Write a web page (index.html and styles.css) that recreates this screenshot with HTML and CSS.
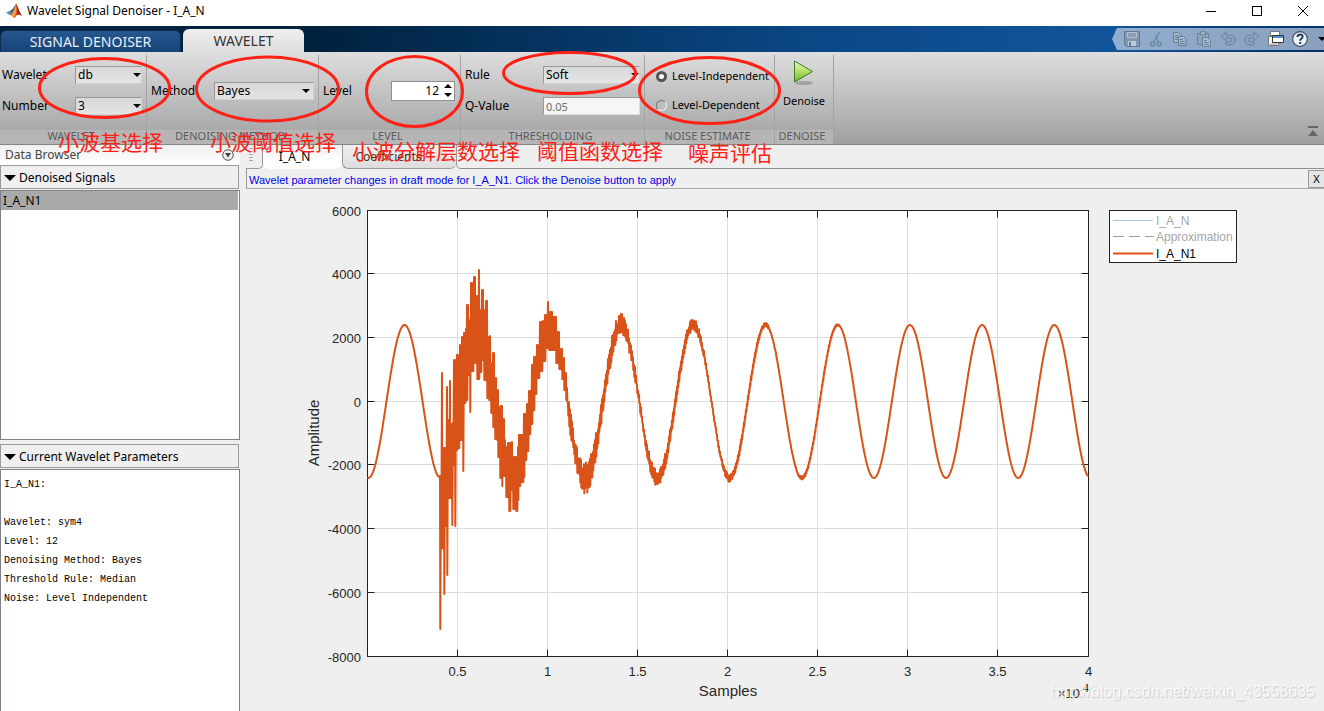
FILE: index.html
```html
<!DOCTYPE html>
<html lang="en">
<head>
<meta charset="utf-8">
<title>Wavelet Signal Denoiser - I_A_N</title>
<link rel="stylesheet" href="styles.css">
</head>
<body>
<div class="app">
  <header class="titlebar">
    <svg class="logo" width="16" height="16" viewBox="0 0 16 16" aria-hidden="true">
      <path d="M0 9.5 4.5 7.5 6.8 9.7 3.6 12z" fill="#4a8fc4"/>
      <path d="M4.5 7.5 Q7 6.5 8.5 3 L9.8 1 8.5 7.5 6 10.5z" fill="#2d5f8c"/>
      <path d="M10 .5Q8.500 4 7.500 7.500L3.800 12 Q6 11.500 7.500 15 Q10 14 11.500 11.500 13 10.500 15.800 13 Q13 8 11.500 3.500 10.500.8 10 .5z" fill="#d9532c"/>
      <path d="M10 .5Q8.800 7 5.500 12.200L7.500 15Q10 12 10.400 7z" fill="#f0a050"/>
      <path d="M10 .5Q12 7 10.800 12 13 10.500 15.800 13 Q13 8 11.500 3.500 10.500.8 10 .5z" fill="#9a2a1c"/>
    </svg>
    <h1 class="title">Wavelet Signal Denoiser - I_A_N</h1>
    <div class="window-buttons">
      <button type="button" aria-label="Minimize"><svg width="12" height="12"><path d="M1 6.500h10" stroke="#000"/></svg></button>
      <button type="button" aria-label="Maximize"><svg width="12" height="12"><rect x="1.500" y="1.500" width="9" height="9" fill="none" stroke="#000"/></svg></button>
      <button type="button" aria-label="Close"><svg width="12" height="12"><path d="M1 1l10 10M11 1L1 11" stroke="#000"/></svg></button>
    </div>
  </header>

  <nav class="tabstrip">
    <button type="button" class="main-tab">SIGNAL DENOISER</button>
    <button type="button" class="main-tab selected">WAVELET</button>
    <div class="quick">
      <button type="button" class="dim" aria-label="Save"><svg width="16" height="16" viewBox="0 0 16 16"><path d="M.5.5h15v15H2.500l-2-2z" fill="#8297af" stroke="#627992"/><path d="M3 1h10v6H3z" fill="#b0c1d4"/><path d="M4 3h8M4 5h8" stroke="#627992"/><path d="M4 10h8v5H4z" fill="#bccbda"/><path d="M5 11h2v4H5z" fill="#627992"/></svg></button>
      <button type="button" class="dim" aria-label="Cut"><svg width="16" height="16" viewBox="0 0 16 16" fill="none" stroke="#6f879f" stroke-width="1.400"><path d="M11.500 1 6 11M7.500 5l3 6"/><circle cx="4.500" cy="13" r="2"/><circle cx="11" cy="13" r="2"/></svg></button>
      <button type="button" class="dim" aria-label="Copy"><svg width="16" height="16" viewBox="0 0 16 16" fill="#a5b7cb" stroke="#667e97"><path d="M1.500 1.500h5l2.500 2.500v7.500H1.500z"/><path d="M3 4.500h3M3 6.500h4M3 8.500h4"/><path d="M6.500 5.500h5l2.500 2.500v6.500H6.500z"/><path d="M8 8.500h3M8 10.500h4.500M8 12.500h4.500"/></svg></button>
      <button type="button" class="dim" aria-label="Paste"><svg width="16" height="16" viewBox="0 0 16 16" fill="#8fa3ba" stroke="#6b829b"><path d="M1.500 2.500h11v11h-11z"/><path d="M4.500.8h5v3h-5z" fill="#a9bacd"/><path d="M6.500 6.500h5l3 2.500v6.500h-8z" fill="#a9bacd"/><path d="M8 9.500h3M8 11.500h5M8 13.500h5"/></svg></button>
      <button type="button" class="dim" aria-label="Undo"><svg width="16" height="16" viewBox="0 0 16 16"><path d="M1 5.500 6 1v3h4a5 5 0 0 1 0 10H6v-3h3.500a2 2 0 0 0 0-4H6v3z" fill="#8da3bb" stroke="#6b829b"/></svg></button>
      <button type="button" class="dim" aria-label="Redo"><svg width="16" height="16" viewBox="0 0 16 16"><path d="M15 5.500 10 1v3H6a5 5 0 0 0 0 10h4v-3H6.500a2 2 0 0 1 0-4H10v3z" fill="#8da3bb" stroke="#6b829b"/></svg></button>
      <button type="button" aria-label="Switch windows"><svg width="16" height="16" viewBox="0 0 16 16"><path d="M2.500.5h9v4h-9z" fill="#fff" stroke="#777"/><path d="M.5 5.500v9h10v-9z" fill="#f4f1ec" stroke="#777"/><path d="M2 13h7" stroke="#999"/><path d="M4.500 4.500h11v7h-11z" fill="#fff" stroke="#333"/><path d="M5 5h10v2H5z" fill="#4f94cf"/></svg></button>
      <button type="button" aria-label="Help"><svg width="16" height="16" viewBox="0 0 16 16"><circle cx="8" cy="8" r="7.300" fill="#eef3f7" stroke="#45525f" stroke-width="1.200"/><path d="M5.500 6q0-2.600 2.600-2.600T10.600 5.800Q10.600 7 9.200 7.800 8.200 8.500 8.200 9.800M8.200 11v2" fill="none" stroke="#203f62" stroke-width="2"/></svg></button>
      <button type="button" class="more" aria-label="More"><svg width="8" height="5"><path d="M0 0h8L4 4z" fill="#000"/></svg></button>
    </div>
  </nav>

  <section class="ribbon">
    <div class="group group-wavelet">
      <div class="fields">
        <label for="wavelet">Wavelet</label>
        <span class="drop"><select id="wavelet"><option>db</option></select></span>
        <label for="number">Number</label>
        <span class="drop"><select id="number"><option>3</option></select></span>
      </div>
      <div class="group-name">WAVELET</div>
    </div>
    <div class="group group-method">
      <div class="fields">
        <label for="method">Method</label>
        <span class="drop"><select id="method"><option>Bayes</option></select></span>
      </div>
      <div class="group-name">DENOISING METHOD</div>
    </div>
    <div class="group group-level">
      <div class="fields">
        <label for="level">Level</label>
        <span class="spinner"><input id="level" type="text" value="12"><svg width="10" height="16"><path d="M1 5 5 1l4 4zM1 10h8l-4 4z" fill="#000"/></svg></span>
      </div>
      <div class="group-name">LEVEL</div>
    </div>
    <div class="group group-threshold">
      <div class="fields">
        <label for="rule">Rule</label>
        <span class="drop"><select id="rule"><option>Soft</option></select></span>
        <label for="qvalue">Q-Value</label>
        <input id="qvalue" class="qvalue" type="text" value="0.05" disabled>
      </div>
      <div class="group-name">THRESHOLDING</div>
    </div>
    <div class="group group-noise">
      <div class="fields">
        <label class="choice"><input type="radio" name="noise" checked>Level-Independent</label>
        <label class="choice"><input type="radio" name="noise">Level-Dependent</label>
      </div>
      <div class="group-name">NOISE ESTIMATE</div>
    </div>
    <div class="group group-run">
      <button type="button" class="run">
        <svg width="24" height="28" viewBox="0 0 24 28" aria-hidden="true">
          <defs><linearGradient id="play" x1="0" y1="0" x2="0" y2="1"><stop offset="0" stop-color="#e9f7c9"/><stop offset=".5" stop-color="#b5dd62"/><stop offset="1" stop-color="#6fb12c"/></linearGradient></defs>
          <ellipse cx="12" cy="24" rx="9" ry="2" fill="#888" opacity=".6"/>
          <path d="M2.500 2v21l18-10.500z" fill="url(#play)" stroke="#3f7d27" stroke-linejoin="round"/>
        </svg>
        Denoise
      </button>
      <div class="group-name">DENOISE</div>
    </div>
    <button type="button" class="collapse" aria-label="Collapse toolstrip"><svg width="10" height="11"><path d="M0 0h10v2H0zM0 10 5 4l5 6z" fill="#666"/></svg></button>
  </section>

  <main class="workspace">
    <aside class="browser">
      <div class="browser-title">Data Browser
        <button type="button" aria-label="Panel menu"><svg width="12" height="12"><circle cx="6" cy="6" r="5.300" fill="#eee" stroke="#555"/><path d="M3 4h6L6 8.500z" fill="#444"/></svg></button>
      </div>
      <button type="button" class="section">Denoised Signals</button>
      <ul class="signals"><li>I_A_N1</li></ul>
      <button type="button" class="section second">Current Wavelet Parameters</button>
      <pre class="params">I_A_N1:

Wavelet: sym4
Level: 12
Denoising Method: Bayes
Threshold Rule: Median
Noise: Level Independent</pre>
    </aside>

    <section class="document">
      <div class="doc-tabs">
        <span class="grip"></span>
        <button type="button" class="doc-tab active">I_A_N</button>
        <button type="button" class="doc-tab">Coefficients</button>
        <span class="rest"></span>
      </div>
      <div class="notice">
        <p>Wavelet parameter changes in draft mode for I_A_N1. Click the Denoise button to apply</p>
        <button type="button" aria-label="Dismiss">X</button>
      </div>
      <div class="plot">
        <svg class="chart" viewBox="240 189 1084 522" preserveAspectRatio="xMinYMin meet" role="img" aria-label="Amplitude over samples">
          <rect x="367.500" y="210.500" width="721" height="446" fill="#fff"/>
          <g id="grid" stroke="#dcdcdc"></g>
          <g id="ticks" stroke="#222"></g>
          <rect x="367.500" y="210.500" width="721" height="446" fill="none" stroke="#222"/>
          <path id="signal" fill="none" stroke="#d95319" stroke-width="2" stroke-linejoin="round"/>
          <g class="tick-text" id="labels"></g>
          <text class="axis-text" x="728" y="696" text-anchor="middle">Samples</text>
          <text class="axis-text" transform="translate(319 433) rotate(-90)" text-anchor="middle">Amplitude</text>
          <text class="tick-text" x="1058" y="698">×10<tspan class="power" x="1083" y="692">4</tspan></text>
          <rect x="1109.500" y="210.500" width="127" height="52" fill="#fff" stroke="#222"/>
          <path d="M1113 220.500h40" stroke="#9fc9e9"/>
          <path d="M1113 236.500h41" stroke="#a0a0a0" stroke-dasharray="11 5"/>
          <path d="M1113 253.500h40" stroke="#d95319" stroke-width="2"/>
          <g class="legend-text">
            <text x="1156" y="225" class="muted">I_A_N</text>
            <text x="1156" y="241" class="muted">Approximation</text>
            <text x="1156" y="258">I_A_N1</text>
          </g>
        </svg>
      </div>
    </section>
  </main>

  <svg class="marks" viewBox="0 0 1324 711" preserveAspectRatio="xMinYMin meet" aria-hidden="true">
    <g fill="none" stroke="#ff2116" stroke-width="3">
      <ellipse cx="104.500" cy="88" rx="65" ry="29.500"/>
      <ellipse cx="267.500" cy="89" rx="71" ry="32"/>
      <ellipse cx="414.500" cy="91.500" rx="48" ry="35"/>
      <ellipse cx="569.500" cy="73" rx="66" ry="20.500"/>
      <ellipse cx="709.500" cy="90.500" rx="70" ry="33"/>
    </g>
    <g class="mark-text">
      <text x="58" y="150">小波基选择</text>
      <text x="210" y="150">小波阈值选择</text>
      <text x="352" y="159">小波分解层数选择</text>
      <text x="537" y="159">阈值函数选择</text>
      <text x="688" y="161">噪声评估</text>
    </g>
  </svg>
  <div class="watermark">http://blog.csdn.net/weixin_43558635</div>
</div>
<script src="chart.js"></script>
</body>
</html>
```

FILE: styles.css
```css
* { box-sizing: border-box; }
body {
  margin: 0;
  font: 12px/16px "Noto Sans", "Noto Sans CJK SC", sans-serif;
  color: #000;
  background: #efefef;
}
button, input, select { font: inherit; color: inherit; margin: 0; }
button { border: 0; padding: 0; background: none; }
svg { display: block; }

.app {
  position: relative;
  min-height: 100vh;
  display: flex;
  flex-direction: column;
  overflow: hidden;
}

/* Title bar */
.titlebar {
  display: flex;
  align-items: center;
  height: 26px;
  padding: 0 15px 4px 6px;
  background: #fff;
}
.title { margin: 0 0 0 5px; font-size: 12px; line-height: 20px; font-weight: 400; }
.window-buttons { margin-left: auto; display: flex; gap: 34px; }
.window-buttons button { width: 12px; }

/* Main tabs */
.tabstrip {
  display: flex;
  align-items: flex-end;
  height: 26px;
  background: linear-gradient(90deg, #00223f 0, #00223f 24%, #0a4684 60%, #12549a 84%, #003068 100%);
}
.main-tab {
  height: 22px;
  width: 181px;
  margin-right: 2px;
  border: 1px solid #0d2c50;
  border-bottom: 0;
  border-radius: 6px 6px 0 0;
  background: linear-gradient(#26578f, #164377);
  color: #e8eef5;
  font-size: 14px;
  line-height: 20px;
}
.main-tab.selected {
  width: 121px;
  height: 23px;
  border: 0;
  background: linear-gradient(#efefef, #dedede);
  color: #333;
}
.quick {
  display: flex;
  align-items: center;
  gap: 8px;
  height: 22px;
  margin: 0 0 2px auto;
  padding: 0 0 0 12px;
  background: linear-gradient(90deg, #91add0, #8aa0bd);
  clip-path: polygon(0 50%, 5px 0, 100% 0, 100% 100%, 5px 100%);
}
.quick .more { margin-left: 2px; width: 6px; overflow: hidden; }

/* Ribbon */
.ribbon {
  display: flex;
  height: 93px;
  padding-top: 3px;
  border-bottom: 1px solid #858585;
  background: linear-gradient(#dedede, #a0a0a0);
}
.group {
  display: flex;
  flex-direction: column;
  border-right: 1px solid #a3a3a3;
}
.fields {
  flex: 1;
  display: grid;
  align-content: center;
  align-items: center;
  row-gap: 13px;
}
.fields label { white-space: nowrap; }
.group-name {
  height: 14px;
  line-height: 12px;
  padding-right: 4px;
  text-align: center;
  font-size: 11px;
  color: #5c5c5c;
  background: #b5b5b5;
  white-space: nowrap;
}
.group-wavelet { width: 147px; }
.group-wavelet .fields { grid-template-columns: 73px 67px; padding: 0 4px 4px 2px; }
.group-method { width: 172px; }
.group-method .fields { grid-template-columns: 63px 100px; padding: 0 0 4px 4px; }
.group-level { width: 142px; }
.group-level .fields { grid-template-columns: 68px 64px; padding: 0 0 4px 4px; }
.group-threshold { width: 184px; }
.group-threshold .fields { grid-template-columns: 78px 97px; padding: 0 4px 4px 4px; }
.group-noise { width: 130px; }
.group-noise .fields { padding: 0 0 4px 11px; font-size: 11px; }
.group-run { width: 59px; }

.drop { position: relative; display: flex; }
.drop select {
  appearance: none;
  width: 100%;
  height: 18px;
  padding: 0 2px;
  border: 1px solid #989898;
  border-right-color: #d2d2d2;
  border-bottom-color: #d2d2d2;
  border-radius: 0;
  background: linear-gradient(#d8d8d8, #e4e4e4);
  line-height: 16px;
}
.drop::after {
  content: "";
  position: absolute;
  right: 1px;
  top: 7px;
  border: 4px solid transparent;
  border-top-color: #000;
  border-bottom: 0;
  pointer-events: none;
}
.group-method .drop::after { right: 4px; }
.spinner {
  display: flex;
  align-items: center;
  height: 20px;
  padding-right: 1px;
  border: 1px solid #8f8f8f;
  background: #fff;
}
.spinner input {
  flex: 1;
  min-width: 0;
  height: 18px;
  padding: 0 4px 0 0;
  border: 0;
  background: none;
  text-align: right;
}
.qvalue {
  width: 100%;
  height: 18px;
  padding: 0 2px;
  border: 1px solid #9a9a9a;
  border-right-color: #ddd;
  border-bottom-color: #ddd;
  background: #f6f6f6;
  color: #6c6c6c;
  font-size: 11px;
}
.choice { display: flex; align-items: center; }
.choice input {
  appearance: none;
  width: 11px;
  height: 11px;
  margin-right: 5px;
  border: 1px solid #777;
  border-color: #777 #eee #eee #777;
  border-radius: 50%;
  background: #bdbdbd;
}
.choice input:checked { border: 3px solid #555; background: #fff; }
.run {
  flex: 1;
  display: flex;
  flex-direction: column;
  align-items: center;
  gap: 6px;
  padding-top: 4px;
  font-size: 11px;
}
.collapse { margin: auto 6px 7px auto; }

/* Workspace */
.workspace { flex: 1; display: flex; min-height: 0; }
.browser { width: 240px; flex: none; display: flex; flex-direction: column; background: #efefef; }
.browser-title {
  display: flex;
  align-items: center;
  justify-content: space-between;
  height: 20px;
  padding: 0 6px 0 5px;
  color: #444;
  background: linear-gradient(#efefef, #fff);
}
.section {
  display: flex;
  align-items: center;
  gap: 3px;
  height: 24px;
  margin-right: 1px;
  padding: 1px 0 0 3px;
  border: 1px solid #9a9a9a;
  background: #efefef;
}
.section::before {
  content: "";
  border: 6px solid transparent;
  border-top-color: #000;
  border-bottom: 0;
}
.section.second { margin-top: 4px; }
.signals {
  flex: none;
  height: 250px;
  margin: 1px 0 0;
  padding: 0 1px 0 0;
  list-style: none;
  border: 1px solid #7c808c;
  background: #fff;
}
.signals li { height: 19px; padding-left: 2px; line-height: 20px; background: #a9a9a9; }
.params {
  flex: 1;
  margin: 1px 0 0;
  padding: 5px 3px;
  border: 1px solid #7c808c;
  border-bottom: 0;
  background: #fff;
  font: 10px/19px "Liberation Mono", monospace;
}

.document { flex: 1; min-width: 0; display: flex; flex-direction: column; padding-left: 6px; }
.doc-tabs { display: flex; height: 24px; }
.grip {
  width: 17px;
  border-right: 1px solid #999;
  border-bottom: 1px solid #999;
  border-radius: 0 0 5px 0;
  background: repeating-linear-gradient(#aaa 0 1px, #efefef 1px 3px) 3px 3px / 4px 15px no-repeat;
}
.doc-tab { width: 114px; padding-right: 22px; border-bottom: 1px solid #999; border-radius: 0 0 6px 6px; background: linear-gradient(#efefef, #ddd); color: #333; }
.doc-tab.active { width: 79px; padding: 0 16px 0 0; border: 0; background: linear-gradient(#efefef, #fff 60%); color: #000; }
.doc-tab:not(.active) { border-left: 1px solid #999; }
.rest { flex: 1; border-bottom: 1px solid #8f8f8f; border-left: 1px solid #999; border-radius: 0 0 0 5px; }
.notice {
  display: flex;
  align-items: center;
  height: 20px;
  border-left: 1px solid #999;
  border-bottom: 1px solid #aaa;
}
.notice p {
  flex: 1;
  margin: 0;
  padding: 2px 0 0 2px;
  color: #0000f0;
  font: 11px/16px "Liberation Sans", sans-serif;
}
.notice button { width: 16px; height: 18px; border: 1px solid #999; border-right: 0; font-size: 11px; background: #e5e5e5; }
.plot { flex: 1; margin-left: -6px; }
.chart { width: 100%; }
.tick-text, .axis-text, .legend-text { font-family: "Liberation Sans", sans-serif; fill: #262626; }
.tick-text { font-size: 13px; }
.axis-text { font-size: 15px; }
.legend-text { font-size: 12px; fill: #000; }
.muted { fill: #a6a6a6; }
.power { font-size: 11px; }

/* Annotations */
.marks { position: absolute; top: 0; left: 0; width: 100%; pointer-events: none; }
.mark-text { font: 400 21px "Noto Sans CJK SC", sans-serif; fill: #ff2116; }
.watermark {
  position: absolute;
  right: 9px;
  bottom: 8px;
  color: rgba(255, 255, 255, .8);
  text-shadow: 1px 1px 1px rgba(0, 0, 0, .15);
  font: 16px/22px "Liberation Sans", sans-serif;
}
```

FILE: chart.js
```js
const NS = "http://www.w3.org/2000/svg";
const LEFT = 367.5, RIGHT = 1088.5, TOP = 210.5, BOTTOM = 656.5;
const grid = document.getElementById("grid");
const ticks = document.getElementById("ticks");
const labels = document.getElementById("labels");

function add(parent, name, attributes, text) {
  const node = document.createElementNS(NS, name);
  for (const key in attributes) node.setAttribute(key, attributes[key]);
  if (text !== undefined) node.textContent = text;
  parent.appendChild(node);
}

for (let i = 1; i <= 8; i++) {
  const x = Math.round(LEFT + (RIGHT - LEFT) * i / 8) - 0.5;
  if (i < 8) {
    add(grid, "path", { d: `M${x} ${TOP}V${BOTTOM}` });
    add(ticks, "path", { d: `M${x} ${TOP}v7M${x} ${BOTTOM}v-7` });
  }
  add(labels, "text", { x, y: 676, "text-anchor": "middle" }, i / 2);
}
for (let i = 0; i <= 7; i++) {
  const y = Math.round(TOP + (BOTTOM - TOP) * i / 7) - 0.5;
  if (i > 0 && i < 7) {
    add(grid, "path", { d: `M${LEFT} ${y}H${RIGHT}` });
    add(ticks, "path", { d: `M${LEFT} ${y}h7M${RIGHT} ${y}h-7` });
  }
  add(labels, "text", { x: 361, y: y + 5, "text-anchor": "end" }, 6000 - 2000 * i);
}

const angle = x => 2 * Math.PI * (x - 404.5) / 72.2;
const wave = x => 401.5 - 76.5 * Math.cos(angle(x));

// Upper and lower edges of the transient.
const upper = [[440,476],[441,480],[442,373],[443,480],[444,448],[446,450],[447,387],[448,420],[450,381],[451,424],[453,423],[454,360],[456,380],[457,355],[459,370],[460,345],[462,337],[464,333],[466,329],[467,305],[469,320],[471,283],[473,306],[474,277],[476,296],[479,270],[480,310],[482,290],[484,310],[486,301],[488,337],[490,336],[491,363],[493,353],[495,378],[497,390],[499,407],[501,406],[503,419],[505,440],[506,447],[508,443],[512,442],[513,457],[516,457],[518,447],[519,435],[523,435],[524,414],[527,404],[529,391],[531,391],[532,365],[534,357],[537,345],[540,322],[543,321],[545,315],[548,302],[549,312],[553,317],[556,317],[557,332],[560,349],[563,358],[565,373],[567,388]];
const lower = [[440,629],[441,548],[443,549],[444,594],[445,526],[447,575],[448,498],[449,498],[452,525],[453,465],[455,526],[456,450],[458,448],[460,440],[463,471],[464,403],[466,400],[468,375],[470,412],[471,371],[474,363],[477,379],[480,372],[482,360],[484,380],[487,398],[489,400],[491,413],[493,427],[495,439],[497,440],[498,457],[500,478],[502,486],[503,476],[506,497],[509,511],[511,490],[513,509],[515,495],[516,511],[518,500],[519,486],[521,482],[524,477],[525,460],[527,451],[529,434],[531,424],[533,410],[535,394],[537,378],[540,371],[543,361],[546,348],[549,350],[553,350],[556,363],[559,369],[562,379],[564,390],[566,400]];
const envelope = [[560,18],[586,16],[621,12],[658,8],[694,6],[730,4],[766,2],[802,2],[838,1],[880,0],[1100,0]];

const step = (table, x) => table.reduce((value, row) => row[0] <= x ? row[1] : value, table[0][1]);
function blend(table, x) {
  for (let i = 1; i < table.length; i++) {
    if (x <= table[i][0]) {
      const [x0, y0] = table[i - 1], [x1, y1] = table[i];
      return y0 + (y1 - y0) * (x - x0) / (x1 - x0);
    }
  }
  return 0;
}
let seed = 41;
function random() {
  seed = (seed * 16807) % 2147483647;
  return seed / 2147483647;
}

const points = [];
for (let x = LEFT; x < 439.5; x++) points.push([x, wave(x)]);
for (let x = 440; x < 568; x++) points.push([x, step(upper, x)], [x + 0.3, step(lower, x)]);
for (let x = 568; x <= RIGHT; x++) {
  const crest = Math.abs(Math.cos(angle(x)));
  const size = blend(envelope, x) * (0.7 + 0.3 * crest);
  if (size < 0.2) {
    points.push([x, wave(x)]);
  } else {
    points.push([x, wave(x) - size * (0.3 + random() * 0.7)], [x + 0.3, wave(x) + size * (0.3 + random() * 0.7)]);
  }
}
document.getElementById("signal").setAttribute("d", "M" + points.map(p => p[0].toFixed(1) + " " + p[1].toFixed(1)).join("L"));
```
